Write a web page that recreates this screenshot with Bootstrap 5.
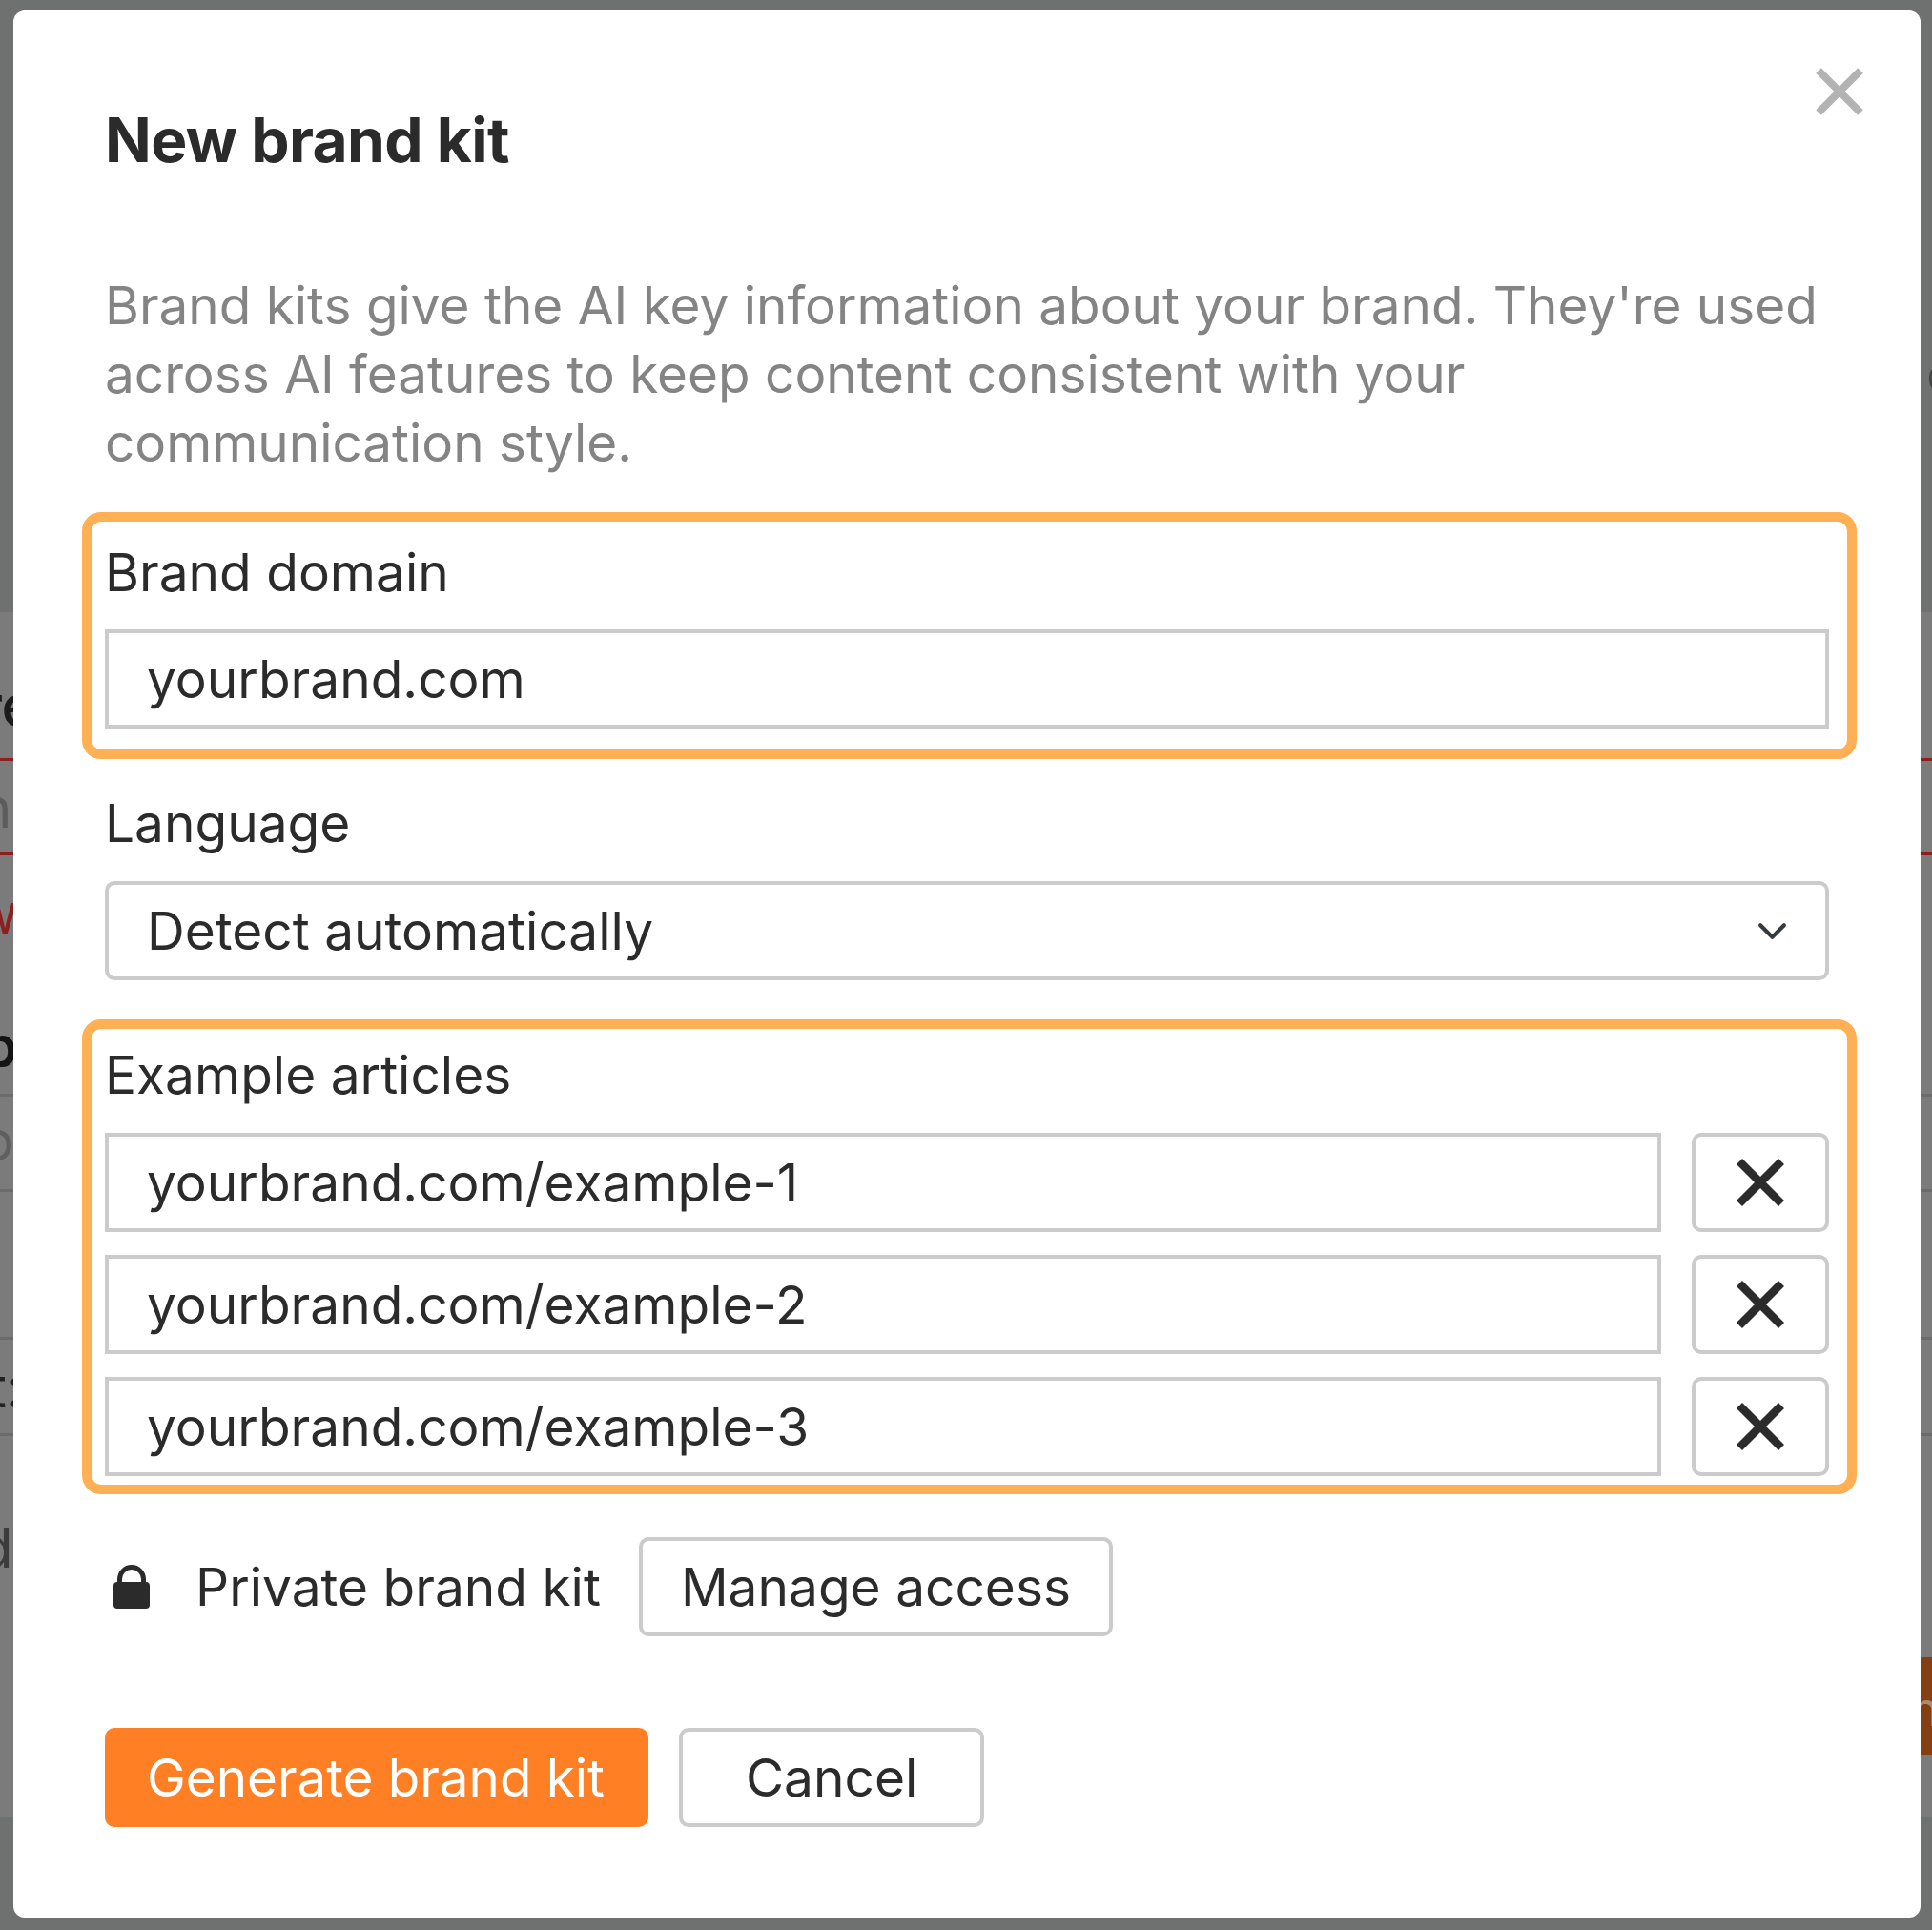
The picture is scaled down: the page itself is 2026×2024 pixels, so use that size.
<!doctype html>
<html lang="en">
<head>
<meta charset="utf-8">
<title>New brand kit</title>
<link rel="stylesheet" href="https://cdn.jsdelivr.net/npm/bootstrap@5.3.0/dist/css/bootstrap.min.css">
<style>
html,body{margin:0;height:2024px;background:#777;overflow:hidden}
body{font-family:Inter,"Liberation Sans",sans-serif;color:#2b2b2b;position:relative;width:2026px}
.scrim{position:absolute;inset:0;background:#7b7b7b;overflow:hidden}
.scrim-top{position:absolute;left:0;right:0;top:0;height:642px;background:#6f7170}
.scrim-bottom{position:absolute;left:0;right:0;top:1906px;bottom:0;background:#6f7170}
.scrim-rule{height:3px;background:#8f1f1f;position:absolute;left:0;right:0}
.scrim-rule.r1{top:795px}.scrim-rule.r2{top:894px}
.scrim-line{height:3px;background:#6b6b6b;position:absolute;left:0;right:0}
.scrim-line.l1{top:1147px}.scrim-line.l2{top:1247px}.scrim-line.l3{top:1402px}.scrim-line.l4{top:1503px}
.scrim-cta{position:absolute;right:0;top:1738px;width:14px;height:103px;background:#843f13}
.frag{position:absolute;white-space:nowrap;font-size:58px;line-height:60px}
.frag.re{left:-20px;top:710px;color:#1c1c1c;font-weight:600}
.frag.nn{left:-22px;top:817px;color:#5c5c5c}
.frag.ww{left:-28px;top:928px;color:#8f1f1f}
.frag.pp{left:-18px;top:1067px;color:#141414;font-weight:600}
.frag.oo{left:-20px;top:1166px;color:#5f5f5f}
.frag.tt{left:-12px;top:1425px;color:#222}
.frag.dd{left:-22px;top:1593px;color:#3c3c3c}
.frag.cc{left:2020px;top:362px;color:#454545}
.frag.nt{left:2004px;top:1762px;font-size:50px;color:#b08a70}
.sheet{position:absolute;left:14px;top:11px;width:2000px;height:2000px;background:#fff;border-radius:12px;padding:100px 96px 0;border:0}
.sheet-title{font-size:64px;font-weight:700;letter-spacing:-.6px;line-height:72px;margin:0;color:#2b2b2b}
.sheet-close{position:absolute;right:60px;top:60px;width:50px;height:50px;padding:0;border:0;background:none;display:flex;align-items:center;justify-content:center}
.sheet-lead{font-size:54.85px;line-height:72px;color:#848484;margin:101px 0 0;width:1810px}
.field-mark{border:10px solid #ffb055;border-radius:20px;margin:0 -29px 0 -24px;padding:0 19px 0 14px}
.field-mark.first{margin-top:37px;height:259px}
.field-mark.second{height:498px;margin-top:0}
.field-name{font-size:55px;line-height:72px;color:#2b2b2b;margin:0;display:block}
.first .field-name{margin-top:17px;margin-bottom:24px}
.second .field-name{margin-top:12px;margin-bottom:25px}
.plain-field{padding:0;margin:31px 0 41px}
.plain-field .field-name{margin-bottom:25px}
.ui-input.form-control,.ui-select.form-select{height:104px;font-size:55px;line-height:72px;color:#2b2b2b;border:4px solid #cbcbcb;padding:0 40px;box-shadow:none}
.ui-input.form-control{border-radius:0}
.ui-select.form-select{border-radius:10px;background-size:33px 33px;background-position:right 39px center}
.url-row{display:flex;gap:32px;margin-bottom:24px}
.url-row:last-child{margin-bottom:0}
.x-btn.btn{width:144px;flex:none;height:104px;padding:0;border:4px solid #cbcbcb;border-radius:10px;display:flex;align-items:center;justify-content:center;background:#fff}
.access-row{display:flex;align-items:center;margin-top:45px;height:104px}
.lock-icon{width:40px;height:48px;margin:0 6px 0 8px;flex:none}
.access-text{font-size:55px;line-height:72px;margin-left:41px;margin-right:40px}
.ghost.btn{height:104px;font-size:55px;line-height:72px;padding:0 40px;border:4px solid #cbcbcb;border-radius:10px;color:#2b2b2b;background:#fff}
.action-row{display:flex;gap:32px;margin-top:96px}
.primary-act.btn{height:104px;font-size:54.7px;line-height:72px;padding:0 46px 0 44px;border:0;border-radius:10px;color:#fff;background:#ff7f24}
.cancel-act.btn{padding:0 66px}
</style>
</head>
<body>
<div class="scrim" aria-hidden="true">
  <div class="scrim-top"></div>
  <div class="scrim-bottom"></div>
  <div class="scrim-rule r1"></div>
  <div class="scrim-rule r2"></div>
  <div class="scrim-line l1"></div>
  <div class="scrim-line l2"></div>
  <div class="scrim-line l3"></div>
  <div class="scrim-line l4"></div>
  <div class="scrim-cta"></div>
  <span class="frag re">re</span>
  <span class="frag nn">n</span>
  <span class="frag ww">w</span>
  <span class="frag pp">p</span>
  <span class="frag oo">o</span>
  <span class="frag tt">t:</span>
  <span class="frag dd">d</span>
  <span class="frag cc">c</span>
  <span class="frag nt">nt</span>
</div>
<div class="sheet modal-content">
  <button type="button" class="sheet-close" aria-label="Close">
    <svg width="50" height="50" viewBox="0 0 50 50"><path d="M3 3 47 47M47 3 3 47" stroke="#b3b3b3" stroke-width="8" fill="none"/></svg>
  </button>
  <h5 class="sheet-title">New brand kit</h5>
  <p class="sheet-lead">Brand kits give the AI key information about your brand. They're used across AI features to keep content consistent with your communication style.</p>
  <div class="field-mark first">
    <label class="field-name">Brand domain</label>
    <input class="form-control ui-input" value="yourbrand.com">
  </div>
  <div class="plain-field">
    <label class="field-name">Language</label>
    <select class="form-select ui-select"><option>Detect automatically</option></select>
  </div>
  <div class="field-mark second">
    <label class="field-name">Example articles</label>
    <div class="url-row"><input class="form-control ui-input" value="yourbrand.com/example-1"><button class="btn x-btn" aria-label="Remove"><svg width="50" height="50" viewBox="0 0 50 50"><path d="M3 3 47 47M47 3 3 47" stroke="#2b2b2b" stroke-width="8.5" fill="none"/></svg></button></div>
    <div class="url-row"><input class="form-control ui-input" value="yourbrand.com/example-2"><button class="btn x-btn" aria-label="Remove"><svg width="50" height="50" viewBox="0 0 50 50"><path d="M3 3 47 47M47 3 3 47" stroke="#2b2b2b" stroke-width="8.5" fill="none"/></svg></button></div>
    <div class="url-row"><input class="form-control ui-input" value="yourbrand.com/example-3"><button class="btn x-btn" aria-label="Remove"><svg width="50" height="50" viewBox="0 0 50 50"><path d="M3 3 47 47M47 3 3 47" stroke="#2b2b2b" stroke-width="8.5" fill="none"/></svg></button></div>
  </div>
  <div class="access-row">
    <svg class="lock-icon" viewBox="0 0 40 48"><path d="M7.5 22V16a12.5 12.5 0 0 1 25 0v6" fill="none" stroke="#2b2b2b" stroke-width="5"/><rect x="1" y="19" width="38" height="28" rx="4" fill="#2b2b2b"/></svg>
    <span class="access-text">Private brand kit</span>
    <button class="btn ghost">Manage access</button>
  </div>
  <div class="action-row">
    <button class="btn primary-act">Generate brand kit</button>
    <button class="btn ghost cancel-act">Cancel</button>
  </div>
</div>
</body>
</html>
